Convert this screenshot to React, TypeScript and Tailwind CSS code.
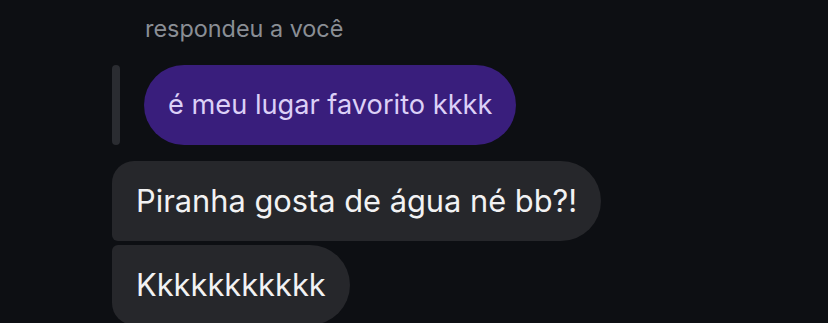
const font = { fontFamily: 'Inter, "Noto Sans", sans-serif' };

export default function App() {
  return (
    <div
      className="h-[323px] w-full overflow-hidden bg-[#0d0f13] pl-[112px]"
      style={font}
    >
      <div className="pl-[33px] pt-[13px] text-[23.4px] leading-[32px] text-[#8a8e95]">
        respondeu a você
      </div>
      <div className="mt-[20px] flex items-stretch gap-6">
        <div className="w-2 rounded-full bg-[#2a2c31]" />
        <div className="flex h-[80px] items-center rounded-full bg-[#391e7c] px-6 text-[27.2px] text-[#dcd0f7]">
          é meu lugar favorito kkkk
        </div>
      </div>
      <div className="mt-4 flex flex-col items-start gap-1">
        <div className="flex h-[80px] items-center rounded-tl-[22px] rounded-bl-[6px] rounded-r-[40px] bg-[#26272b] px-6 text-[30.8px] text-[#f2f2f3]">
          Piranha gosta de água né bb?!
        </div>
        <div className="flex h-[80px] items-center rounded-tl-[6px] rounded-bl-[22px] rounded-r-[40px] bg-[#26272b] px-6 text-[30.8px] text-[#f2f2f3]">
          Kkkkkkkkkkk
        </div>
      </div>
    </div>
  );
}
